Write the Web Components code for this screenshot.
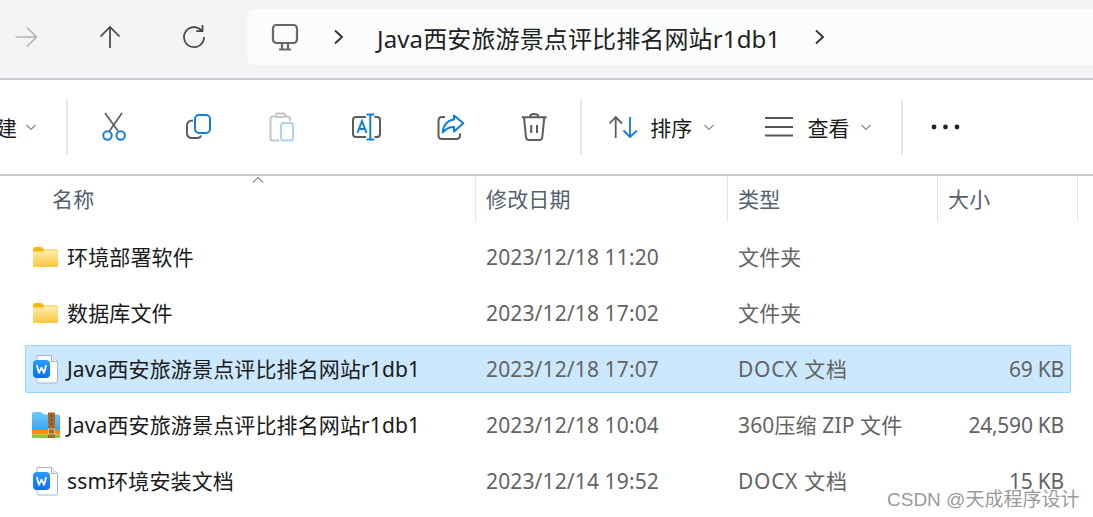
<!doctype html>
<html lang="zh">
<head>
<meta charset="utf-8">
<title>文件夹</title>
<style>
  html, body { margin: 0; padding: 0; background: #fff; }
  body {
    width: 1093px;
    height: 517px;
    overflow: hidden;
    font: 21px "Noto Sans", "Noto Sans CJK SC", sans-serif;
    letter-spacing: .13px;
    color: #1a1a1a;
  }
  .docx { letter-spacing: .7px; }
</style>
</head>
<body>
<explorer-window>
  <nav-bar slot="nav">Java西安旅游景点评比排名网站r1db1</nav-bar>
  <tool-bar slot="tools"></tool-bar>
  <file-header slot="head"></file-header>

  <file-row>
    <app-icon slot="icon" name="folder"></app-icon>
    环境部署软件
    <span slot="date">2023/12/18 11:20</span>
    <span slot="type">文件夹</span>
  </file-row>
  <file-row>
    <app-icon slot="icon" name="folder"></app-icon>
    数据库文件
    <span slot="date">2023/12/18 17:02</span>
    <span slot="type">文件夹</span>
  </file-row>
  <file-row selected>
    <app-icon slot="icon" name="docx"></app-icon>
    Java西安旅游景点评比排名网站r1db1
    <span slot="date">2023/12/18 17:07</span>
    <span slot="type" class="docx">DOCX 文档</span>
    <span slot="size">69 KB</span>
  </file-row>
  <file-row>
    <app-icon slot="icon" name="zip"></app-icon>
    Java西安旅游景点评比排名网站r1db1
    <span slot="date">2023/12/18 10:04</span>
    <span slot="type">360压缩 ZIP 文件</span>
    <span slot="size">24,590 KB</span>
  </file-row>
  <file-row>
    <app-icon slot="icon" name="docx"></app-icon>
    ssm环境安装文档
    <span slot="date">2023/12/14 19:52</span>
    <span slot="type" class="docx">DOCX 文档</span>
    <span slot="size">15 KB</span>
  </file-row>
</explorer-window>

<script>
const BLUE = '#0f7fd9';
const GREY = '#5c5c5c';

// every icon is drawn in a 32x32 box unless it says otherwise
const ICONS = {
  forward: `<g fill="none" stroke="#b3b3b3" stroke-width="1.7"><path d="M5.5 16H26.5M17 6.5L26.5 16L17 25.5"/></g>`,
  up: `<g fill="none" stroke="#444" stroke-width="1.7"><path d="M16 27V6M6.5 15.5L16 6L25.5 15.5"/></g>`,
  refresh: `<g fill="none" stroke="#444" stroke-width="1.7"><path d="M23.5 9.5A10 10 0 1 0 26 16M24.5 4V10.2H18.2"/></g>`,
  monitor: `<g fill="none" stroke="#666" stroke-width="2.2"><rect x="4" y="4" width="24" height="18" rx="3.5"/><path d="M13 22V28M19 22V28M10 28.5H22"/></g>`,
  next: `<path d="M12 9.5L19 16L12 22.5" fill="none" stroke="#333" stroke-width="1.9"/>`,
  cut: `<g fill="none"><path d="M7 2L20 20M24 2L11.5 20" stroke="${GREY}" stroke-width="1.7"/><circle cx="9.5" cy="24.5" r="4.2" stroke="${BLUE}" stroke-width="2"/><circle cx="22.7" cy="24.5" r="4.2" stroke="${BLUE}" stroke-width="2"/></g>`,
  copy: `<g fill="none" stroke-width="2"><path d="M11 9.5C7 9.5 5 11.5 5 14.5V22C5 25 7 27 10 27H15C17 27 18.6 26 19 24.5" stroke="${GREY}"/><rect x="13" y="4" width="15" height="18" rx="4" stroke="${BLUE}"/></g>`,
  paste: `<g fill="none" stroke-width="2"><path d="M13 29.5H7Q4.5 29.5 4.5 27V8Q4.5 5.5 7 5.5H21.5Q24 5.5 24 8V10" stroke="#c6c6c6"/><rect x="10" y="2.5" width="9" height="3.5" rx="1.5" fill="#fff" stroke="#c6c6c6"/><rect x="15" y="12" width="12" height="17.5" rx="2.5" stroke="#a9d3f5"/></g>`,
  rename: `<g fill="none" stroke-width="2"><path d="M16 6H6Q3 6 3 9V23Q3 26 6 26H16M24.5 6H27Q30 6 30 9V23Q30 26 27 26H24.5" stroke="${GREY}"/><path d="M20.3 3.5V28.5M16.5 3.5H24.3M16.5 28.5H24.3M7.5 22L12 10L16.5 22M9 18H15" stroke="${BLUE}"/></g>`,
  share: `<g fill="none" stroke-width="2"><path d="M11 6H8Q4.5 6 4.5 9.5V24.5Q4.5 28 8 28H22Q26 28 26 24.5V22.5" stroke="${GREY}"/><path d="M20 4.5L29.3 12.3L20 20.5V16C15 16 11.5 18 8.7 21.5C9 14 14 9 20 8.5Z" stroke="${BLUE}" stroke-linejoin="round"/></g>`,
  trash: `<g fill="none" stroke="${GREY}" stroke-width="2"><path d="M3.7 6.3H28.7M6 6.3L8 26Q8.3 29 11 29H21.5Q24 29 24.3 26L26.3 6.3M12 6Q12 3 16 3Q20.5 3 20.5 6M13.2 14V22M19 14V22"/></g>`,
  sort: `<g fill="none" stroke-width="1.8"><path d="M7.7 27V6M1.5 12.5L7.7 6L14 12.5" stroke="${GREY}"/><path d="M22 6V26M15.5 19.5L22 26L29 19.5" stroke="${BLUE}"/></g>`,
  view: `<g fill="none" stroke="#555" stroke-width="2"><path d="M2 7H30M2 16H30M2 24.5H30"/></g>`,
  dots: `<g fill="#222"><circle cx="3" cy="16" r="2.4"/><circle cx="14.5" cy="16" r="2.4"/><circle cx="26" cy="16" r="2.4"/></g>`,
  folder: `<defs><linearGradient id="f" x1="0" y1="0" x2="0" y2="1"><stop offset="0" stop-color="#ffedb0"/><stop offset="1" stop-color="#fcc73c"/></linearGradient></defs><path d="M2 8Q2 6 4 6H10.5L13 8.5H25.5Q27 8.5 27 10V12H2Z" fill="#f7b512"/><path d="M2 10.5H12L14 9.2H25.5Q27 9.2 27 10.7V25Q27 26 26 26H3Q2 26 2 25Z" fill="url(#f)"/>`,
  docx: `<defs><linearGradient id="d" x1="0" y1="0" x2="0" y2="1"><stop offset="0" stop-color="#259dff"/><stop offset="1" stop-color="#0b6ff0"/></linearGradient></defs><path d="M6 2.5H20.5L26.5 8.5V28.5Q26.5 30 25 30H7.5Q6 30 6 28.5Z" fill="#fff" stroke="#a7b2c4" stroke-width="1"/><path d="M20.5 2.5V8.5H26.5" fill="#e9edf3" stroke="#a7b2c4" stroke-width="1"/><rect x="2" y="7" width="17" height="18" rx="4" fill="url(#d)"/><path d="M5.8 12L8 20L10.5 14.5L13 20L15.2 12" fill="none" stroke="#fff" stroke-width="1.7" stroke-linejoin="round"/>`,
  zip: `<defs><linearGradient id="z" x1="0" y1="0" x2="0" y2="1"><stop offset="0" stop-color="#6bcbfc"/><stop offset="1" stop-color="#3ba2ef"/></linearGradient></defs><path d="M1 5.5Q1 3 3.5 3H10L13 5.5H27Q29 5.5 29 7.5V22H1Z" fill="url(#z)"/><rect x="1" y="21" width="28" height="4.5" fill="#ff8c10"/><path d="M1 25.5H29V27.5Q29 29 27.5 29H2.5Q1 29 1 27.5Z" fill="#8cc63a"/><rect x="17" y="3.5" width="7" height="25.5" fill="#a5692a"/><path d="M20.5 6V18" stroke="#5e3a14" stroke-width="1" stroke-dasharray="2 2"/><rect x="17.5" y="20" width="6" height="5" fill="none" stroke="#f2c581" stroke-width="1"/>`
};

class AppIcon extends HTMLElement {
  constructor() {
    super();
    const shadow = this.attachShadow({ mode: 'open' });
    const w = this.getAttribute('w') || 32;
    shadow.innerHTML = `
      <style>
        :host { display: block; width: ${w}px; height: 32px; flex: none; }
        svg { display: block; }
      </style>
      <svg width="${w}" height="32" viewBox="0 0 ${w} 32">${ICONS[this.getAttribute('name')]}</svg>`;
  }
}
customElements.define('app-icon', AppIcon);

class ExplorerWindow extends HTMLElement {
  constructor() {
    super();
    this.attachShadow({ mode: 'open' }).innerHTML = `
      <style>
        :host { display: flex; flex-direction: column; width: 1093px; height: 517px; overflow: hidden; position: relative; }
        .list { display: flex; flex-direction: column; gap: 8px; padding: 11px 22px 0 25px; }
        .mark {
          position: absolute; left: 887px; top: 484px;
          font: 19px "Liberation Sans", "Noto Sans CJK SC", sans-serif;
          letter-spacing: 0;
          color: rgba(125,125,125,.8);
          text-shadow: 0 0 2px #fff, 0 0 2px #fff;
          white-space: nowrap;
        }
      </style>
      <slot name="nav"></slot>
      <slot name="tools"></slot>
      <slot name="head"></slot>
      <div class="list"><slot></slot></div>
      <div class="mark">CSDN @天成程序设计</div>`;
  }
}
customElements.define('explorer-window', ExplorerWindow);

class NavBar extends HTMLElement {
  constructor() {
    super();
    this.attachShadow({ mode: 'open' }).innerHTML = `
      <style>
        :host {
          display: flex; align-items: center; box-sizing: border-box;
          height: 80px; padding-bottom: 4px; background: #f3f4f6;
          border-bottom: 2px solid #c9c9d0; flex: none;
        }
        .btn { width: 84px; display: flex; justify-content: center; flex: none; }
        .btn.first { margin-left: -16px; }
        .addr {
          flex: 1; height: 56px; margin: 0 -10px 0 11px; display: flex; align-items: center;
          background: #fbfcfc; border-radius: 8px; padding-left: 22px; color: #222; font-size: 24px;
        }
        .addr .sep { margin-left: 22px; margin-right: 22px; }
        .addr .end { margin-left: 24px; }
        .text { white-space: nowrap; }
      </style>
      <div class="btn first"><app-icon name="forward"></app-icon></div>
      <div class="btn"><app-icon name="up"></app-icon></div>
      <div class="btn"><app-icon name="refresh"></app-icon></div>
      <div class="addr">
        <app-icon name="monitor"></app-icon>
        <app-icon class="sep" name="next"></app-icon>
        <span class="text"><slot></slot></span>
        <app-icon class="end" name="next"></app-icon>
      </div>`;
  }
}
customElements.define('nav-bar', NavBar);

const CHEVRON = `<svg class="chev" width="12" height="12" viewBox="0 0 12 12"><path d="M1.5 4L6 8.5L10.5 4" fill="none" stroke="#888" stroke-width="1.2"/></svg>`;

class ToolBar extends HTMLElement {
  constructor() {
    super();
    this.attachShadow({ mode: 'open' }).innerHTML = `
      <style>
        :host {
          display: flex; align-items: center; box-sizing: border-box; flex: none;
          height: 96px; border-bottom: 2px solid #c9c9d0; white-space: nowrap;
        }
        .sep { width: 2px; height: 56px; background: #e8e8e8; flex: none; }
        .tool { width: 84px; display: flex; justify-content: center; flex: none; }
        .chev { flex: none; display: block; }
      </style>
      <span style="margin-left:-4px">建</span>
      <span style="margin-left:8px;display:flex">${CHEVRON}</span>
      <div class="sep" style="margin-left:29px"></div>
      <div class="tool" style="margin-left:4px"><app-icon name="cut"></app-icon></div>
      <div class="tool"><app-icon name="copy"></app-icon></div>
      <div class="tool"><app-icon name="paste"></app-icon></div>
      <div class="tool"><app-icon name="rename"></app-icon></div>
      <div class="tool"><app-icon name="share"></app-icon></div>
      <div class="tool"><app-icon name="trash"></app-icon></div>
      <div class="sep" style="margin-left:4px"></div>
      <app-icon name="sort" style="margin-left:26px"></app-icon>
      <span style="margin-left:10px">排序</span>
      <span style="margin-left:11px;display:flex">${CHEVRON}</span>
      <app-icon name="view" style="margin-left:48px"></app-icon>
      <span style="margin-left:12px">查看</span>
      <span style="margin-left:10px;display:flex">${CHEVRON}</span>
      <div class="sep" style="margin-left:29px"></div>
      <app-icon name="dots" w="30" style="margin-left:28px"></app-icon>`;
  }
}
customElements.define('tool-bar', ToolBar);

class FileHeader extends HTMLElement {
  constructor() {
    super();
    this.attachShadow({ mode: 'open' }).innerHTML = `
      <style>
        :host {
          display: grid; grid-template-columns: 476px 252px 210px 140px 1fr; height: 46px;
          flex: none; position: relative; color: #55606e;
        }
        div { display: flex; align-items: center; padding: 0 0 2px 10px; border-right: 1px solid #e5e5e5; }
        div:first-of-type { padding-left: 52px; }
        div:last-of-type { border-right: 0; }
        svg { position: absolute; left: 252px; top: 0; }
      </style>
      <div>名称</div><div>修改日期</div><div>类型</div><div>大小</div><div></div>
      <svg width="12" height="8" viewBox="0 0 12 8"><path d="M1 6.5L6 1.5L11 6.5" fill="none" stroke="#888" stroke-width="1.2"/></svg>`;
  }
}
customElements.define('file-header', FileHeader);

class FileRow extends HTMLElement {
  constructor() {
    super();
    this.attachShadow({ mode: 'open' }).innerHTML = `
      <style>
        :host {
          display: grid; grid-template-columns: 41px 419px 252px 210px 1fr; align-items: center;
          box-sizing: border-box; height: 48px; padding-right: 6px; white-space: nowrap;
          border: 1px solid transparent; border-radius: 2px;
        }
        :host([selected]) { background: #cce8ff; border-color: #99d1ff; }
        .icon { display: flex; padding-left: 5px; }
        .dim { color: #636363; }
        .up { padding-bottom: 2px; }
        .size { text-align: right; letter-spacing: -.25px; }
      </style>
      <div class="icon"><slot name="icon"></slot></div>
      <div class="up"><slot></slot></div>
      <div class="dim"><slot name="date"></slot></div>
      <div class="dim up"><slot name="type"></slot></div>
      <div class="dim size"><slot name="size"></slot></div>`;
  }
}
customElements.define('file-row', FileRow);
</script>
</body>
</html>
